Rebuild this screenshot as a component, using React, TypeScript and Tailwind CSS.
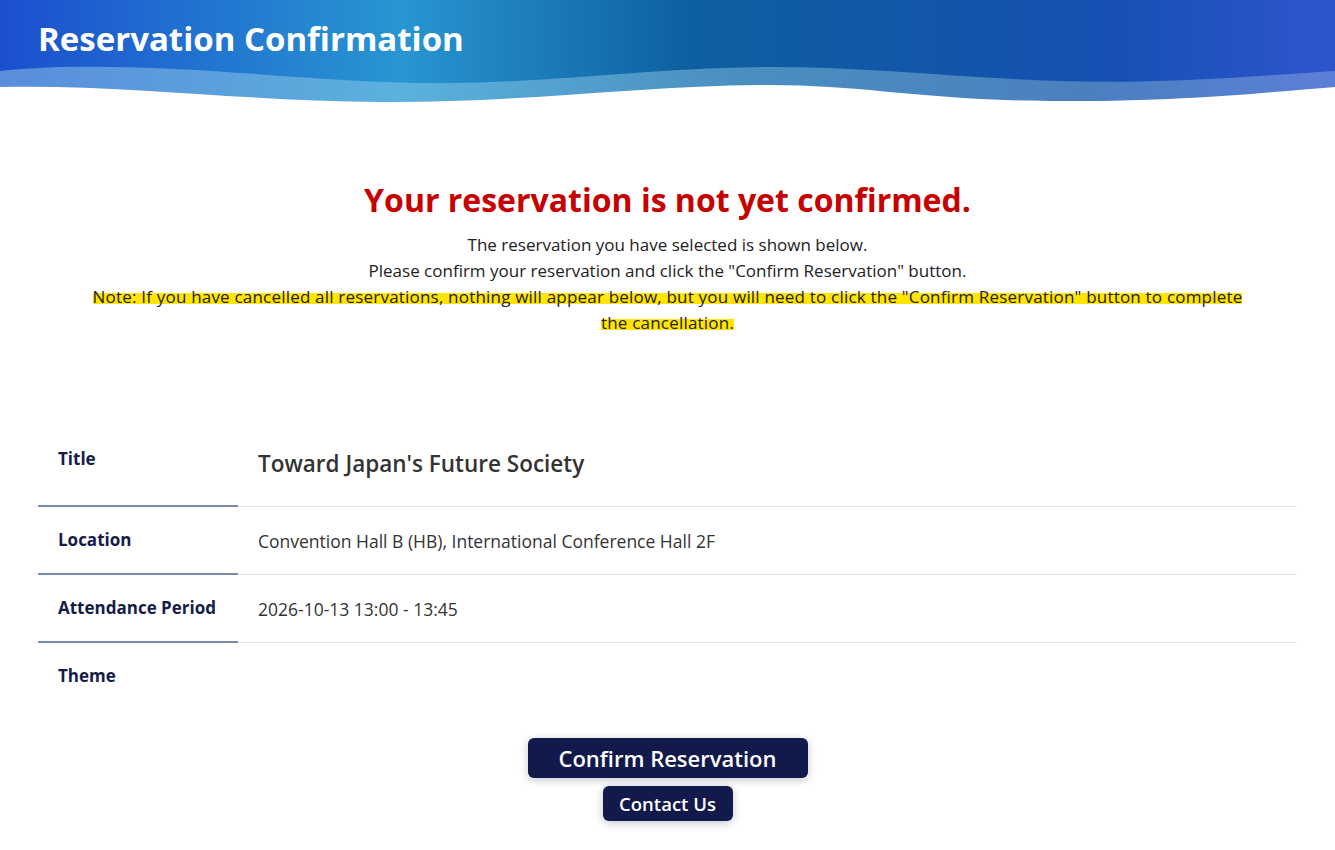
import React from "react";

type Row = {
  label: string;
  value?: string;
  big?: boolean;
};

const rows: Row[] = [
  { label: "Title", value: "Toward Japan's Future Society", big: true },
  { label: "Location", value: "Convention Hall B (HB), International Conference Hall 2F" },
  { label: "Attendance Period", value: "2026-10-13 13:00 - 13:45" },
  { label: "Theme" },
];

function HeaderWave() {
  return (
    <svg
      className="absolute inset-0 w-full h-full"
      viewBox="0 0 1335 105"
      preserveAspectRatio="none"
      aria-hidden="true"
    >
      <defs>
        <linearGradient id="dark" x1="0" y1="0" x2="1" y2="0">
          <stop offset="0" stopColor="#1b4fcf" />
          <stop offset="0.3" stopColor="#2896d1" />
          <stop offset="0.52" stopColor="#0e5f9f" />
          <stop offset="0.82" stopColor="#1450b1" />
          <stop offset="1" stopColor="#2f55cd" />
        </linearGradient>
        <linearGradient id="light" x1="0" y1="0" x2="1" y2="0">
          <stop offset="0" stopColor="#5a8ddb" />
          <stop offset="0.3" stopColor="#5bb1dd" />
          <stop offset="0.55" stopColor="#4a8fc0" />
          <stop offset="0.82" stopColor="#4b7fbf" />
          <stop offset="1" stopColor="#5c80d8" />
        </linearGradient>
      </defs>
      {/* light band with its lower wave */}
      <path
        d="M0 0 H1335 V87 C1270 92 1180 102 1050 101 C920 100 860 84 760 85 C640 86 520 103 380 102 C240 101 120 84 0 87 Z"
        fill="url(#light)"
      />
      {/* dark top with its wave edge */}
      <path
        d="M0 0 H1335 V71 C1230 78 1150 84 1060 81 C960 78 860 66 760 67 C640 69 560 82 450 83 C320 84 200 64 60 67 C30 68 10 70 0 71 Z"
        fill="url(#dark)"
      />
    </svg>
  );
}

export default function App() {
  return (
    <div className="min-h-[850px] bg-white font-['Open_Sans','Liberation_Sans',sans-serif] text-[#222]">
      {/* HEADER */}
      <header className="relative h-[105px]">
        <HeaderWave />
        <h1 className="relative px-[38px] pt-[19px] text-[33px] font-bold leading-10 text-white">
          Reservation Confirmation
        </h1>
      </header>

      <main className="px-[38px]">
        {/* MENSAJE */}
        <section className="pt-[75px] text-center">
          <h2 className="text-[32px] font-bold leading-10 text-[#c70000]">
            Your reservation is not yet confirmed.
          </h2>
          <div className="mt-[12px] text-[17px] leading-[26px] text-[#222]">
            <p>The reservation you have selected is shown below.</p>
            <p>Please confirm your reservation and click the "Confirm Reservation" button.</p>
            <p>
              <span className="[box-decoration-break:clone] tracking-[0.2px] bg-[linear-gradient(transparent_35%,#ffe500_35%,#ffe500_82%,transparent_82%)]">
                Note: If you have cancelled all reservations, nothing will appear below, but you will need to click the "Confirm Reservation" button to complete
                <br />
                the cancellation.
              </span>
            </p>
          </div>
        </section>

        {/* TABLA */}
        <section className="mt-[90px] grid grid-cols-[200px_1fr]">
          {rows.map((row, i) => {
            const last = i === rows.length - 1;
            return (
              <React.Fragment key={row.label}>
                <div
                  className={
                    last
                      ? "pl-5 pt-[21px] pb-[23px] text-[17px] font-bold leading-6 text-[#151c4a]"
                      : row.big
                      ? "pl-5 pt-[21px] pb-[34px] text-[17px] font-bold leading-6 text-[#151c4a] border-b-2 border-[#7589b3]"
                      : "pl-5 pt-[21px] pb-[21px] text-[17px] font-bold leading-6 text-[#151c4a] border-b-2 border-[#7589b3]"
                  }
                >
                  {row.label}
                </div>
                <div
                  className={
                    last
                      ? "flex items-center pl-5"
                      : "flex items-center pl-5 border-b border-[#e3e3e3]"
                  }
                >
                  {row.value && (
                    <span
                      className={
                        row.big
                          ? "pb-[4px] text-[22.5px] font-semibold leading-7 text-[#333]"
                          : "text-[17.5px] leading-6 text-[#333]"
                      }
                    >
                      {row.value}
                    </span>
                  )}
                </div>
              </React.Fragment>
            );
          })}
        </section>

        {/* BOTONES */}
        <section className="mt-[27px] flex flex-col items-center gap-2 pb-[28px]">
          <button className="h-10 w-[280px] rounded-md bg-[#121a4b] text-[22px] font-semibold text-white shadow-[0_2px_8px_rgba(18,26,75,0.25)]">
            Confirm Reservation
          </button>
          <button className="h-[35px] w-[130px] rounded-md bg-[#121a4b] text-[18.5px] font-semibold text-white shadow-[0_2px_8px_rgba(18,26,75,0.25)]">
            Contact Us
          </button>
        </section>
      </main>
    </div>
  );
}
